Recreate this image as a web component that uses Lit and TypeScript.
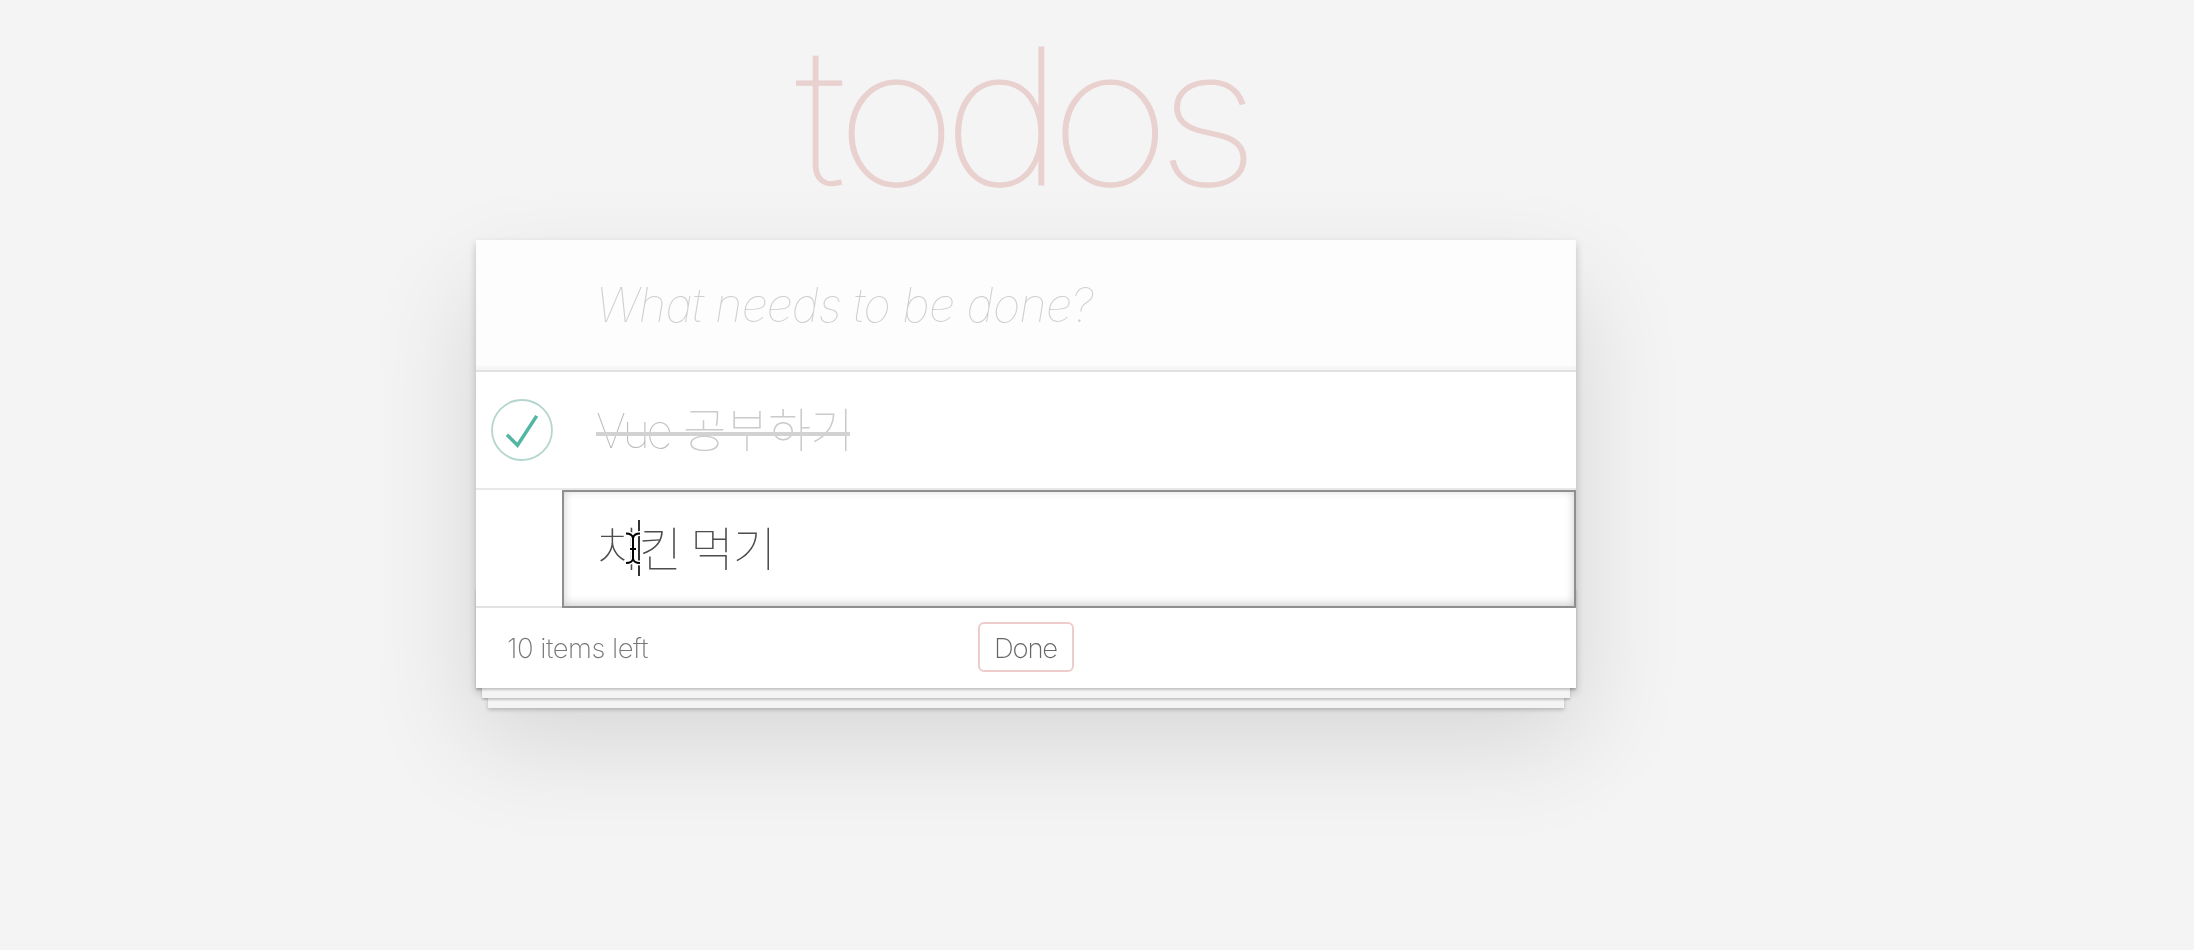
import { LitElement, html, css } from "lit";
import { customElement } from "lit/decorators.js";

@customElement("app-root")
export class AppRoot extends LitElement {
  static styles = css`
    :host {
      display: block;
      box-sizing: border-box;
      height: 950px;
      overflow: hidden;
      background: #f4f4f4;
      color: #4d4d4d;
      font-family: Inter, "Noto Sans CJK KR", sans-serif;
      font-weight: 100;
    }
    .page { width: 1100px; margin-left: 476px; }
    h1 {
      margin: 0;
      height: 240px;
      box-sizing: border-box;
      padding: 14px 11px 0 0;
      text-align: center;
      font-size: 190px;
      line-height: 204px;
      font-weight: 100;
      letter-spacing: -13px;
      color: #e8d1cf;
      white-space: nowrap;
    }
    .title {
      display: inline-block;
      transform: scaleX(1.1);
      -webkit-text-stroke: 1px #e8d1cf;
    }
    .t { letter-spacing: -9px; }
    .card {
      background: #fff;
      box-shadow: 0 4px 8px rgba(0, 0, 0, 0.2), 0 50px 100px 4px rgba(0, 0, 0, 0.12);
    }
    .ph, .vue, .kr, .count, .label { display: inline-block; will-change: transform; }
    .new {
      height: 130px;
      box-sizing: border-box;
      padding-left: 120px;
      background: #fdfdfd;
      box-shadow: inset 0 -4px 2px rgba(0, 0, 0, 0.03);
      font-size: 47px;
      line-height: 130px;
      font-style: italic;
      letter-spacing: -0.8px;
      color: #cfcfcf;
    }
    .list { border-top: 2px solid #e2e2e2; }
    .row {
      display: flex;
      height: 118px;
      box-sizing: border-box;
      border-bottom: 2px solid #e8e8e8;
      font-size: 47px;
      line-height: 116px;
    }
    .row.last { border-bottom: 0; }
    .toggle { display: block; width: 120px; height: 116px; flex: none; }
    .done { color: #bcbcbc; height: 116px; }
    .struck {
      display: flex;
      position: relative;
      width: 254px;
      height: 116px;
      white-space: nowrap;
    }
    .struck::after {
      content: "";
      position: absolute;
      left: 0;
      right: 0;
      top: 60px;
      height: 4px;
      background: #d2d2d2;
    }
    .vue { width: 87px; flex: none; letter-spacing: -3.6px; line-height: 117px; }
    .gutter { width: 86px; height: 118px; box-sizing: border-box; border-bottom: 2px solid #e2e2e2; }
    .edit {
      position: relative;
      flex: 1;
      height: 118px;
      box-sizing: border-box;
      border: 2px solid #8f8f8f;
      padding-left: 32px;
      box-shadow: inset 0 -2px 10px rgba(0, 0, 0, 0.2);
      line-height: 107px;
    }
    .cursor { position: absolute; left: 60px; top: 26px; }
    .foot {
      position: relative;
      display: grid;
      grid-template-columns: 1fr 96px 1fr;
      align-items: center;
      height: 80px;
      padding: 0 31px;
      font-size: 27.5px;
      font-weight: 200;
      letter-spacing: -0.5px;
      color: #777;
    }
    .foot::before {
      content: "";
      position: absolute;
      inset: auto 0 0 0;
      height: 100px;
      pointer-events: none;
      box-shadow: 0 2px 2px rgba(0, 0, 0, 0.2), 0 16px 0 -6px #f4f4f4,
        0 18px 2px -6px rgba(0, 0, 0, 0.2), 0 32px 0 -12px #f4f4f4,
        0 34px 4px -12px rgba(0, 0, 0, 0.2);
    }
    button {
      width: 96px;
      height: 50px;
      margin-top: -2px;
      padding: 2px 2px 0 0;
      border: 2px solid #efcccc;
      border-radius: 6px;
      background: none;
      color: #666;
      font: inherit;
      letter-spacing: -1.2px;
      text-align: center;
    }
    .kr { font-family: "Noto Sans CJK KR", sans-serif; letter-spacing: -0.8px; }
    .k1 { line-height: 110px; color: #cbcbcb; }
  `;

  render() {
    return html`
      <div class="page">
        <h1><span class="title"><span class="t">t</span>odos</span></h1>
        <section class="card">
          <div class="new"><span class="ph">What needs to be done?</span></div>
          <div class="list">
            <div class="row">
              <svg class="toggle" viewBox="0 0 120 116">
                <circle cx="46" cy="58" r="30" fill="none" stroke="#b4d6cf" stroke-width="1.8" />
                <path transform="translate(16 28) scale(.6)" fill="#52b6a2" d="M72 25L42 71 27 56l-4 4 20 20 34-52z" />
              </svg>
              <div class="done"><span class="struck"><span class="vue">Vue</span> <span class="kr k1">공부하기</span></span></div>
            </div>
            <div class="row last">
              <div class="gutter"></div>
              <div class="edit">
                <span class="kr k2">치킨 먹기</span>
                <svg class="cursor" width="32" height="64" viewBox="0 0 32 64">
                  <path d="M15 2v56" stroke="#333" stroke-width="2" fill="none" />
                  <path d="M2 15.500Q8 15.500 9 20Q10 15.500 16 15.500M9 19v24M2 45Q8 45 9 41Q10 45 16 45M6 31h6" stroke="#fff" stroke-width="5" fill="none" />
                  <path d="M2 15.500Q8 15.500 9 20Q10 15.500 16 15.500M9 19v24M2 45Q8 45 9 41Q10 45 16 45M6 31h6" stroke="#000" stroke-width="2" fill="none" />
                </svg>
              </div>
            </div>
          </div>
          <footer class="foot">
            <span class="count">10 items left</span>
            <button><span class="label">Done</span></button>
          </footer>
        </section>
      </div>
    `;
  }
}
